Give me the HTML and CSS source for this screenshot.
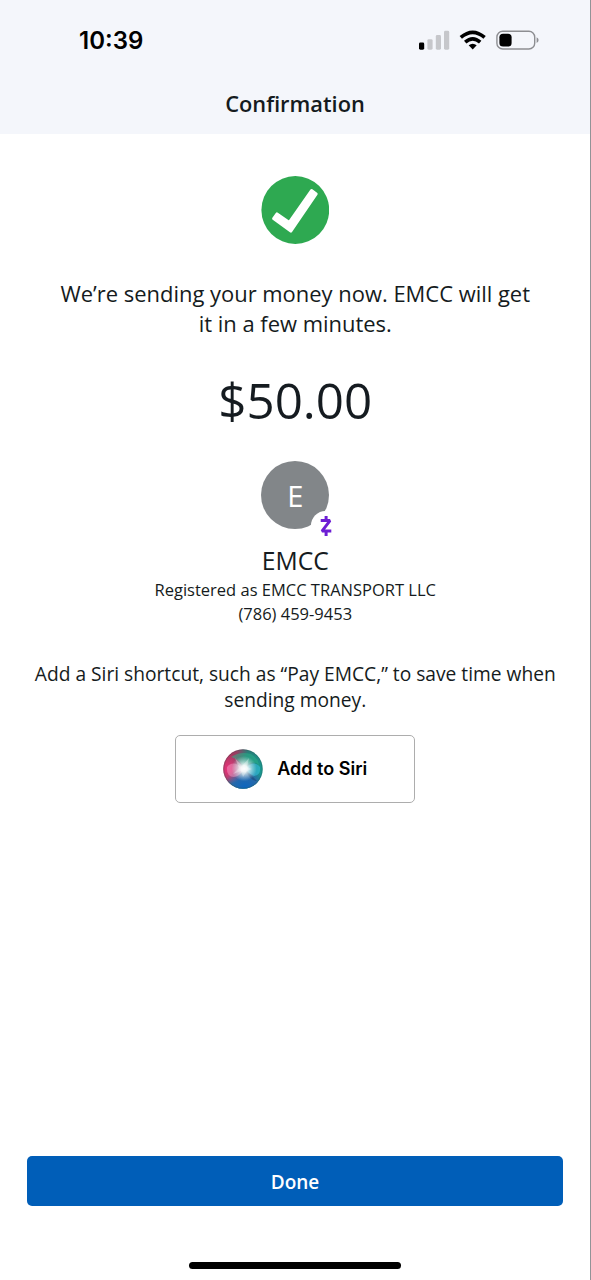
FILE: index.html
```html
<!DOCTYPE html>
<html lang="en">
<head>
<meta charset="utf-8">
<title>Confirmation</title>
<link rel="stylesheet" href="styles.css">
</head>
<body>
<div class="screen">
  <header class="header">
    <div class="status">
      <span class="time">10:39</span>
      <svg class="indicators" width="124" height="24" viewBox="0 0 124 24">
        <rect x="4" y="14.5" width="5.2" height="7.2" rx="1.4" fill="#000"/>
        <g fill="#c6c7cb">
          <rect x="12.4" y="11.2" width="5.2" height="10.5" rx="1.4"/>
          <rect x="20.8" y="7" width="5.2" height="14.7" rx="1.4"/>
          <rect x="29" y="2.8" width="5.2" height="18.9" rx="1.4"/>
        </g>
        <g fill="none" stroke="#000" stroke-width="3.6">
          <path d="M45.8 9.4Q57.7 -0.8 69.6 9.4"/>
          <path d="M50.2 14.1Q57.7 7.5 65.2 14.1"/>
        </g>
        <path d="M53.7 17.3Q57.7 14.2 61.7 17.3L57.7 21.6Z" fill="#000"/>
        <rect x="81.9" y="3.2" width="37.8" height="17.8" rx="5.8" fill="none" stroke="#8d8e92" stroke-width="1.4"/>
        <path d="M121.6 9.2Q123.6 10 123.6 12.1T121.6 15Z" fill="#8d8e92"/>
        <rect x="84.4" y="5.7" width="12.2" height="12.9" rx="3.6" fill="#000"/>
      </svg>
    </div>
    <h1 class="title">Confirmation</h1>
  </header>
  <main class="content">
    <svg class="success" width="68" height="68" viewBox="0 0 68 68">
      <circle cx="34.3" cy="34" r="33.9" fill="#2ea951"/>
      <path d="M12.6 42.6L16 37.9L28.3 46.4L50.5 14.6L55.2 17.9L29.8 55.1Z" fill="#fff" stroke="#fff" stroke-width="3" stroke-linejoin="round"/>
    </svg>
    <p class="message">We’re sending your money now. EMCC will get<br>it in a few minutes.</p>
    <div class="amount">$50.00</div>
    <div class="avatar">E
      <span class="badge">
        <svg width="12" height="20" viewBox="0 0 12 20" fill="none" stroke="#6d1ed4" stroke-width="3">
          <path d="M.7 4.6H10L2 15.1H11.3" stroke-linejoin="bevel"/>
          <path d="M6.1 0V5M6.1 15V20"/>
        </svg>
      </span>
    </div>
    <div class="name">EMCC</div>
    <div class="detail">Registered as EMCC TRANSPORT LLC</div>
    <div class="detail">(786) 459-9453</div>
    <p class="hint">Add a Siri shortcut, such as “Pay EMCC,” to save time when<br>sending money.</p>
    <button class="siri">
      <svg width="40" height="40" viewBox="0 0 40 40">
        <defs>
          <linearGradient id="rim" x1="0" y1="0.25" x2="1" y2="0.6">
            <stop offset="0" stop-color="#b92853"/><stop offset=".25" stop-color="#983f63"/>
            <stop offset=".5" stop-color="#287d78"/><stop offset="1" stop-color="#169b91"/>
          </linearGradient>
          <radialGradient id="blue" cx=".55" cy="1" r=".55">
            <stop offset="0" stop-color="#0866c2"/><stop offset=".6" stop-color="#2869a9"/><stop offset="1" stop-color="#2869a9" stop-opacity="0"/>
          </radialGradient>
          <radialGradient id="pink" cx=".14" cy=".5" r=".38">
            <stop offset="0" stop-color="#ec2d79"/><stop offset="1" stop-color="#e64586" stop-opacity="0"/>
          </radialGradient>
          <radialGradient id="glow" cx=".53" cy=".49" r=".32">
            <stop offset="0" stop-color="#fff"/><stop offset=".25" stop-color="#fff" stop-opacity=".9"/><stop offset="1" stop-color="#d3e8ef" stop-opacity="0"/>
          </radialGradient>
        </defs>
        <circle cx="20" cy="20" r="19.7" fill="url(#rim)"/>
        <circle cx="20" cy="20" r="19.7" fill="url(#blue)"/>
        <circle cx="20" cy="20" r="19.7" fill="url(#pink)"/>
        <path d="M8 8Q17 2 28 5Q35 9 36 16Q29 10 21 18Q15 10 8 8Z" fill="#29b58a" opacity=".5"/>
        <path d="M21 20Q31 10 37 18Q38 26 31 27Q26 25 21 20Z" fill="#34b9d7" opacity=".65"/>
        <path d="M21 20Q10 10 4 18Q3 28 11 28Q17 27 21 20Z" fill="#ef9bc4" opacity=".5"/>
        <path d="M22 20L34 32Q27 32 22 20Z" fill="#183f70" opacity=".5"/>
        <circle cx="20" cy="20" r="19.7" fill="url(#glow)"/>
        <path d="M12 9L19 17L26 9L24 18L29 20L24 22L20 28L18 22L10 25L16 19Z" fill="#fff" opacity=".3"/>
        <circle cx="20" cy="20" r="19.2" fill="none" stroke="#355" stroke-opacity=".35"/>
      </svg>
      <span>Add to Siri</span>
    </button>
  </main>
  <footer class="footer">
    <button class="done">Done</button>
    <div class="home"></div>
  </footer>
</div>
</body>
</html>
```
FILE: styles.css
```css
* { box-sizing: border-box; }
body { margin: 0; background: #fff; }
.screen {
  width: 591px;
  height: 1280px;
  border-right: 1px solid #929397;
  display: flex;
  flex-direction: column;
  font-family: "Open Sans", sans-serif;
  color: #151b20;
}
h1, p { margin: 0; font-weight: 400; }
.header { height: 134px; background: #f4f6fb; }
.status {
  height: 80px;
  padding: 2px 51px 0 79px;
  display: flex;
  justify-content: space-between;
  align-items: center;
}
.time {
  font: 600 24px/30px Inter, sans-serif;
  color: #000;
}
.indicators { display: block; margin-top: -3px; }
.title {
  font-size: 21.8px;
  line-height: 30px;
  font-weight: 600;
  text-align: center;
  padding-top: 9px;
}
.content {
  flex: 1;
  padding: 42px 0 0 0.5px;
  display: flex;
  flex-direction: column;
  align-items: center;
  text-align: center;
  white-space: nowrap;
}
.message { margin-top: 35px; font-size: 21.95px; line-height: 30px; }
.amount { margin-top: 27px; font-size: 49.3px; line-height: 68px; }
.avatar {
  position: relative;
  width: 68px;
  height: 68px;
  margin-top: 27px;
  border-radius: 50%;
  background: #828689;
  color: #fff;
  font-size: 29px;
  line-height: 69px;
}
.badge {
  position: absolute;
  left: 50px;
  top: 50px;
  width: 29px;
  height: 29px;
  border-radius: 50%;
  background: #fff;
  display: grid;
  place-items: center;
}
.badge svg { display: block; }
.name { margin-top: 15px; font-size: 24.7px; line-height: 34px; }
.detail { font-size: 16.5px; line-height: 24px; }
.hint { margin-top: 35px; font-size: 19.2px; line-height: 26px; }
.siri {
  width: 240px;
  height: 68px;
  margin-top: 22px;
  padding: 0;
  border: 1.5px solid #adadad;
  border-radius: 5px;
  background: #fff;
  display: flex;
  align-items: center;
  justify-content: center;
  gap: 14px;
  font: 600 18px/24px Inter, sans-serif;
  color: #000;
}
.siri svg { display: block; }
.footer {
  padding: 0 27px 11px;
  display: flex;
  flex-direction: column;
  align-items: center;
}
.done {
  width: 536px;
  height: 50px;
  padding-top: 2px;
  border: 0;
  border-radius: 5px;
  background: #005eb8;
  color: #fff;
  font: 600 19px/26px "Open Sans", sans-serif;
}
.home {
  width: 212px;
  height: 7px;
  margin-top: 56px;
  border-radius: 4px;
  background: #000;
}
```
